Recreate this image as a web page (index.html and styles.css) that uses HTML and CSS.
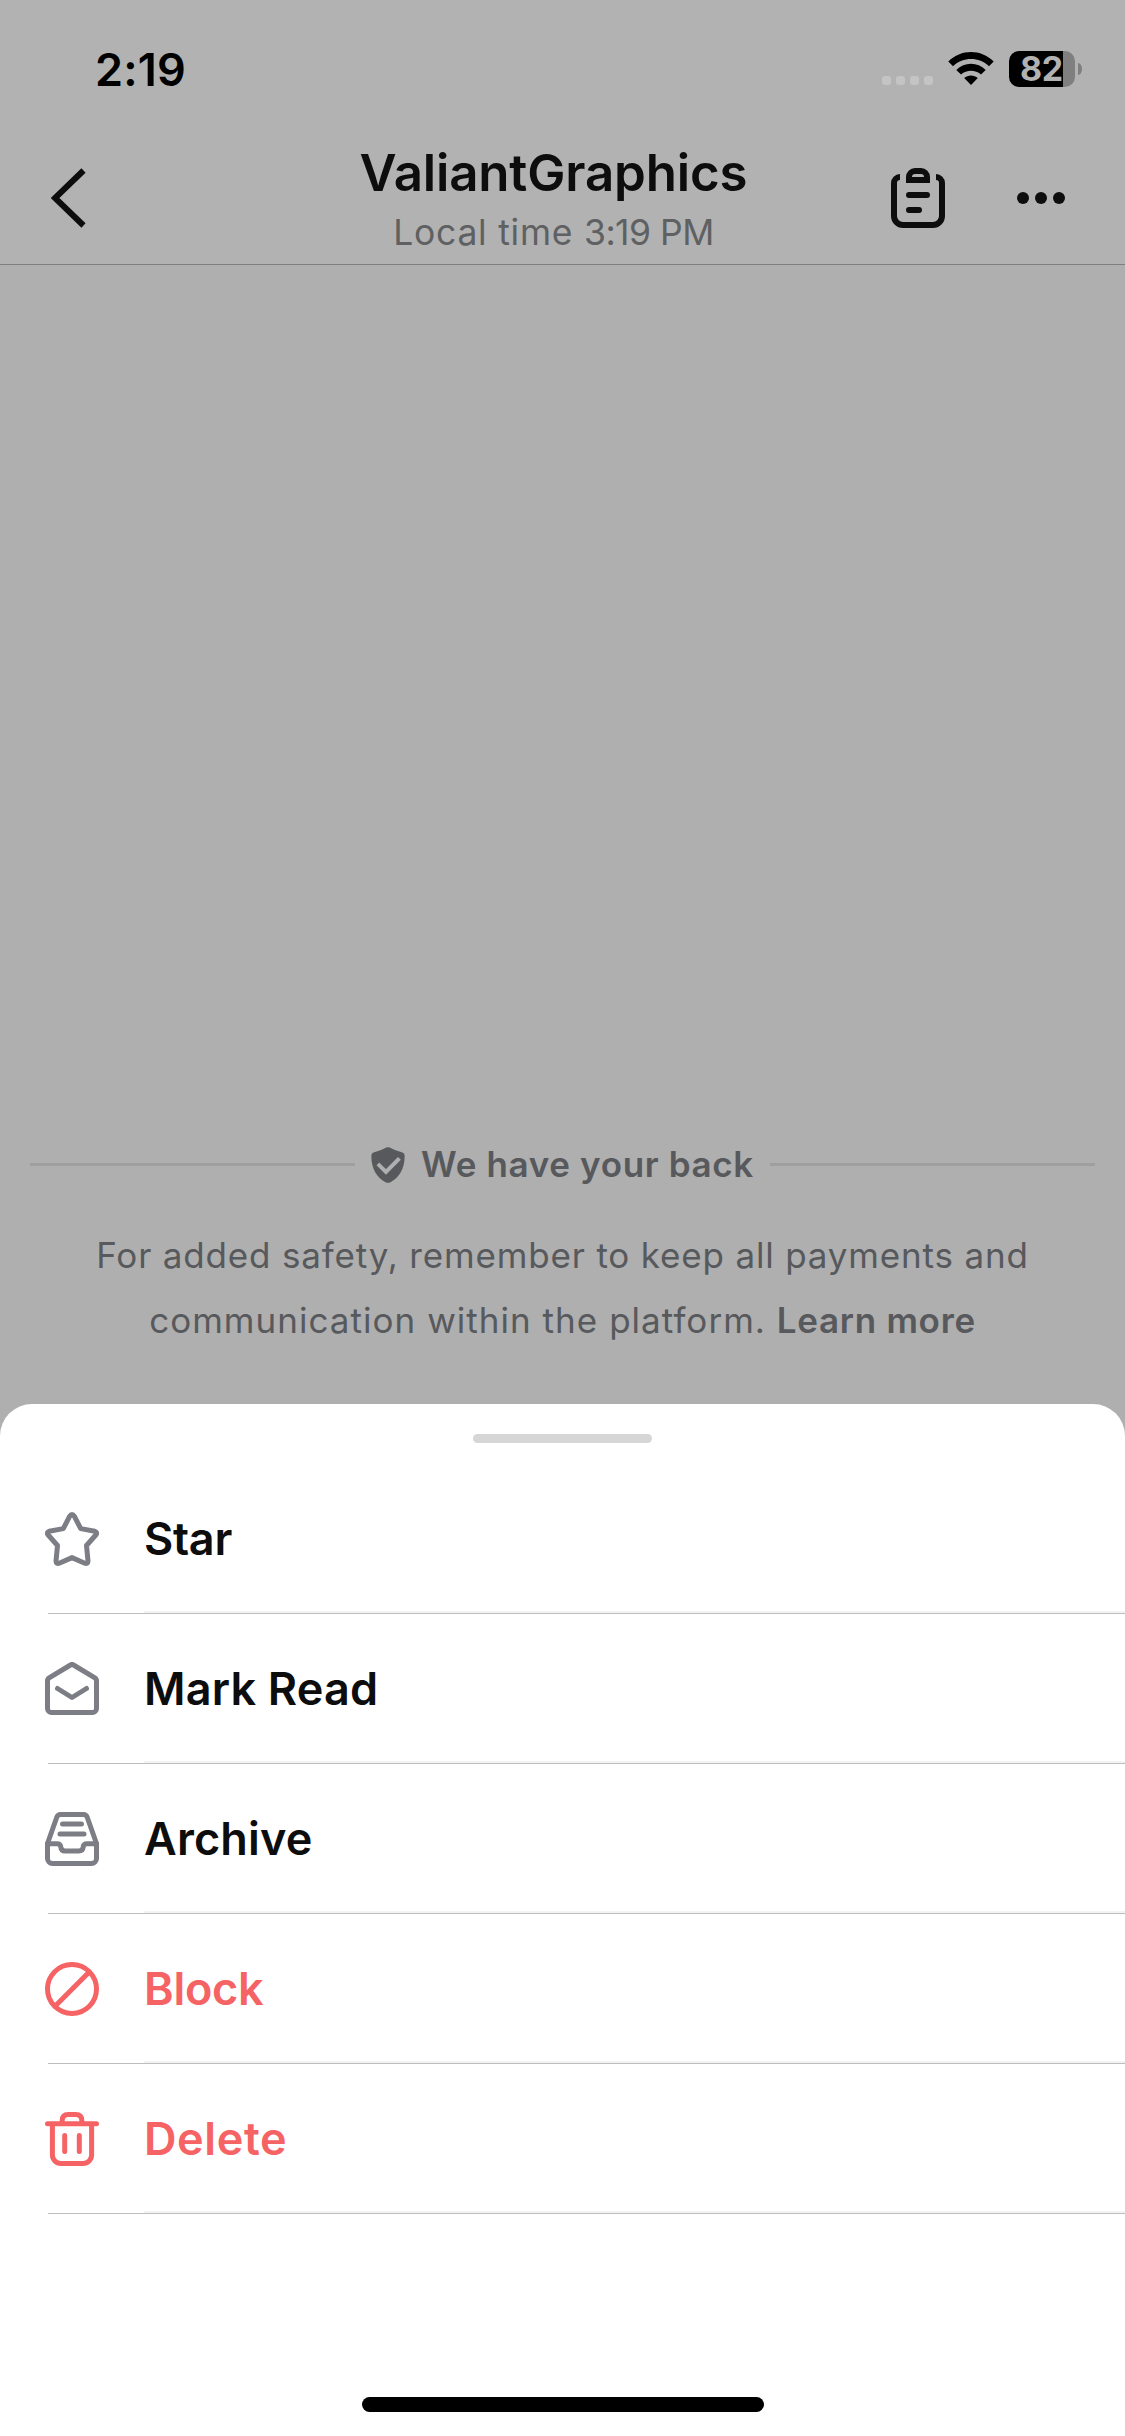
FILE: index.html
```
<!DOCTYPE html>
<html lang="en">
<head>
<meta charset="utf-8">
<title>ValiantGraphics</title>
<link rel="stylesheet" href="styles.css">
</head>
<body>
<div class="screen">
  <div class="status-bar">
    <div class="clock">2:19</div>
    <div class="status-icons">
      <div class="cellular"><i></i><i></i><i></i><i></i></div>
      <svg class="wifi" width="46" height="34" viewBox="0 0 46 34">
        <path d="M0.3 9.6C12.800 -3.200 33.200 -3.200 45.700 9.600L41 14.300C31 4.600 15 4.600 5 14.300Z"/>
        <path d="M8.300 17.900C16.400 9.800 29.600 9.800 37.700 17.900L33 22.600C27.300 17.600 18.700 17.600 13 22.600Z"/>
        <path d="M16.200 26.100C20 22.700 26 22.700 29.800 26.100L23 33Z"/>
      </svg>
      <div class="battery">
        <div class="battery-body">82</div>
        <div class="battery-cap"></div>
      </div>
    </div>
  </div>

  <header class="chat-header">
    <button class="back" aria-label="Back">
      <svg width="36" height="60" viewBox="0 0 36 60"><path d="M32.500 2.500L4 30L32.500 57.500"/></svg>
    </button>
    <div class="titles">
      <h1 class="title">ValiantGraphics</h1>
      <p class="subtitle">Local time <span class="local-time">3:19 PM</span></p>
    </div>
    <div class="actions">
      <svg class="clipboard" width="54" height="60" viewBox="0 0 54 60">
        <path d="M9 9a6 6 0 0 0-6 6V48a9 9 0 0 0 9 9h30a9 9 0 0 0 9-9V15a6 6 0 0 0-6-6"/>
        <path d="M18 12V9a6 6 0 0 1 6-6h6a6 6 0 0 1 6 6v3z"/>
        <path class="round" d="M18 27h18M18 42h10"/>
      </svg>
      <svg width="48" height="12" viewBox="0 0 48 12"><circle cx="6" cy="6" r="6"/><circle cx="24" cy="6" r="6"/><circle cx="42" cy="6" r="6"/></svg>
    </div>
  </header>

  <main class="conversation">
    <div class="safety-heading">
      <svg width="34" height="36" viewBox="0 0 34 36">
        <path class="shield" d="M15.300 .6Q17-.3 18.700 .6Q24.500 4 31.500 5.600Q33.500 6.200 33.600 8.300C34 21 28.500 30.500 19.500 35.200Q17 36.500 14.500 35.200C5.500 30.500 0 21 .4 8.300Q.5 6.200 2.500 5.600Q9.500 4 15.300 .6Z"/>
        <path class="tick" d="M8.300 18.300L15 25L27 12.800"/>
      </svg>
      <h2>We have your back</h2>
    </div>
    <p class="safety-text">For added safety, remember to keep all payments and<br><span class="wide">communication within the platform. </span><b>Learn more</b></p>
  </main>

  <section class="sheet">
    <div class="grabber"></div>
    <ul class="menu">
      <li class="item">
        <svg width="54" height="54" viewBox="0 0 54 54"><path d="M24.600 4.400Q27 .6 29.400 4.400L35.700 16.600L49.800 19.300Q53 20.500 50.800 23L41.500 33.500L43 49Q42.800 52.300 39.800 51.200L27 45.600L14.200 51.200Q11.200 52.300 11 49L12.500 33.500L3.200 23Q1 20.500 4.200 19.300L18.300 16.600Z"/></svg>
        <span class="tight">Star</span>
      </li>
      <li class="item">
        <svg width="54" height="54" viewBox="0 0 54 54"><path d="M25.500 3Q27 2 28.500 3L49.500 15.600Q51.500 16.800 51.500 19V46.500a4 4 0 0 1-4 4H6.500a4 4 0 0 1-4-4V19Q2.500 16.800 4.500 15.600Z"/><path d="M12.500 26.500L27 35.500L41.500 26.500"/></svg>
        <span>Mark Read</span>
      </li>
      <li class="item">
        <svg width="54" height="54" viewBox="0 0 54 54"><path d="M2.500 31.500L11.700 5.500Q12.800 2.500 15.500 2.500h23Q41.200 2.500 42.300 5.500L51.500 31.500V46.500a5 5 0 0 1-5 5h-39a5 5 0 0 1-5-5Z"/><path d="M17.500 12h19M15 22h24M2.500 31.700h9.500q3.500 0 3.800 3.300q.4 4 4.200 4h14q3.800 0 4.200-4q.3-3.300 3.800-3.300h9.500"/></svg>
        <span>Archive</span>
      </li>
      <li class="item danger">
        <svg width="54" height="54" viewBox="0 0 54 54"><circle cx="27" cy="27" r="24.500"/><path d="M10 44.300L44.200 10"/></svg>
        <span class="tight">Block</span>
      </li>
      <li class="item danger">
        <svg width="54" height="54" viewBox="0 0 54 54"><path d="M2.500 11.700h49M7.400 11.700V43a8.500 8.500 0 0 0 8.500 8.500h22.200a8.500 8.500 0 0 0 8.500-8.500V11.700M17.200 11.700V8.500q0-6 6-6h7.600q6 0 6 6v3.200M19.700 23.500v16M34.300 23.500v16"/></svg>
        <span class="loose">Delete</span>
      </li>
    </ul>
    <div class="home-indicator"></div>
  </section>
</div>
</body>
</html>
```
FILE: styles.css
```
* { box-sizing: border-box; margin: 0; padding: 0; }

body {
  background: #afafaf;
  font-family: Inter, "Liberation Sans", sans-serif;
  color: #0d0d0d;
}

svg { display: block; flex: none; }

.screen {
  width: 1125px;
  height: 2436px;
  display: flex;
  flex-direction: column;
  overflow: hidden;
}

/* Status bar */
.status-bar {
  height: 138px;
  padding: 0 43px 0 95px;
  display: flex;
  align-items: center;
  justify-content: space-between;
  background: #b2b2b2;
  color: #000;
}
.clock { font-size: 45px; font-weight: 600; letter-spacing: .2px; }
.status-icons { display: flex; align-items: center; }
.cellular { display: flex; gap: 5px; padding-top: 23px; margin-right: 15px; }
.cellular i { width: 9px; height: 9px; border-radius: 3px; background: #c4c4c4; }
.wifi { margin-right: 15px; }
.battery { display: flex; align-items: center; gap: 3px; }
.battery-body {
  width: 66px;
  height: 36px;
  padding-left: 11px;
  border-radius: 10px;
  background: linear-gradient(90deg, #000 54px, #7f7f7f 54px);
  color: #b2b2b2;
  font-size: 34px;
  font-weight: 700;
  line-height: 36px;
  letter-spacing: -.5px;
}
.battery-cap { width: 4px; height: 12px; border-radius: 0 4px 4px 0 / 0 6px 6px 0; background: #7f7f7f; }

/* Chat header */
.chat-header {
  height: 127px;
  display: grid;
  grid-template-columns: 234px 1fr 252px;
  background: #b2b2b2;
  border-bottom: 1px solid #7f7f7f;
}
.back {
  align-self: start;
  margin: 30px 0 0 51px;
  border: 0;
  background: none;
}
.back path { fill: none; stroke: #0d0d0d; stroke-width: 6; }
.titles {
  padding-top: 5px;
  display: flex;
  flex-direction: column;
  align-items: center;
  gap: 7px;
}
.title { font-size: 51px; font-weight: 600; line-height: 60px; letter-spacing: -.15px; }
.subtitle {
  font-size: 35.5px;
  line-height: 46px;
  letter-spacing: .75px;
  color: #5e6062;
  white-space: nowrap;
}
.local-time { letter-spacing: -.5px; }
.actions {
  height: 60px;
  margin-top: 30px;
  padding: 0 60px 0 18px;
  display: flex;
  align-items: center;
  justify-content: space-between;
}
.actions circle { fill: #0d0d0d; }
.clipboard path { fill: none; stroke: #0d0d0d; stroke-width: 6; }
.clipboard .round { stroke-linecap: round; }

/* Conversation */
.conversation {
  height: 1139px;
  padding: 0 30px 51px;
  display: flex;
  flex-direction: column;
  justify-content: flex-end;
  gap: 38px;
  color: #57595c;
}
.safety-heading { height: 41px; display: flex; align-items: center; gap: 16px; }
.safety-heading::before,
.safety-heading::after { content: ""; flex: 1; height: 3px; background: #9f9f9f; }
.safety-heading h2 { font-size: 35px; font-weight: 600; line-height: 41px; letter-spacing: .65px; }
.shield { fill: #57595c; }
.tick { fill: none; stroke: #afafaf; stroke-width: 4; stroke-linecap: square; }
.safety-text {
  font-size: 35px;
  line-height: 65px;
  letter-spacing: .83px;
  text-align: center;
  white-space: nowrap;
}
.safety-text .wide { letter-spacing: 1.03px; }
.safety-text b { font-weight: 600; letter-spacing: .7px; }

/* Bottom sheet */
.sheet {
  flex: 1;
  padding: 30px 0 24px;
  display: flex;
  flex-direction: column;
  align-items: center;
  background: #fff;
  border-radius: 32px 32px 0 0;
}
.grabber { width: 179px; height: 9px; border-radius: 4.5px; background: #d6d6d6; }
.menu { width: 100%; margin-top: 21px; list-style: none; }
.item {
  height: 150px;
  padding-left: 45px;
  display: flex;
  align-items: center;
  gap: 45px;
  font-size: 45px;
  font-weight: 600;
  letter-spacing: .18px;
  background:
    linear-gradient(#bdbdbd, #bdbdbd) 48px 149px / 100% 1px no-repeat,
    linear-gradient(#f3f3f3, #f3f3f3) 144px 147px / 100% 2px no-repeat;
}
.item span { padding-bottom: 2px; }
.item .tight { letter-spacing: -.25px; }
.item .loose { letter-spacing: .6px; }
.item svg {
  fill: none;
  stroke: #7d7e85;
  stroke-width: 5;
  stroke-linecap: round;
  stroke-linejoin: round;
}
.danger { color: #f66364; }
.danger svg { stroke: #f66364; }
.home-indicator {
  width: 402px;
  height: 15px;
  margin-top: auto;
  border-radius: 7.5px;
  background: #000;
}
```
